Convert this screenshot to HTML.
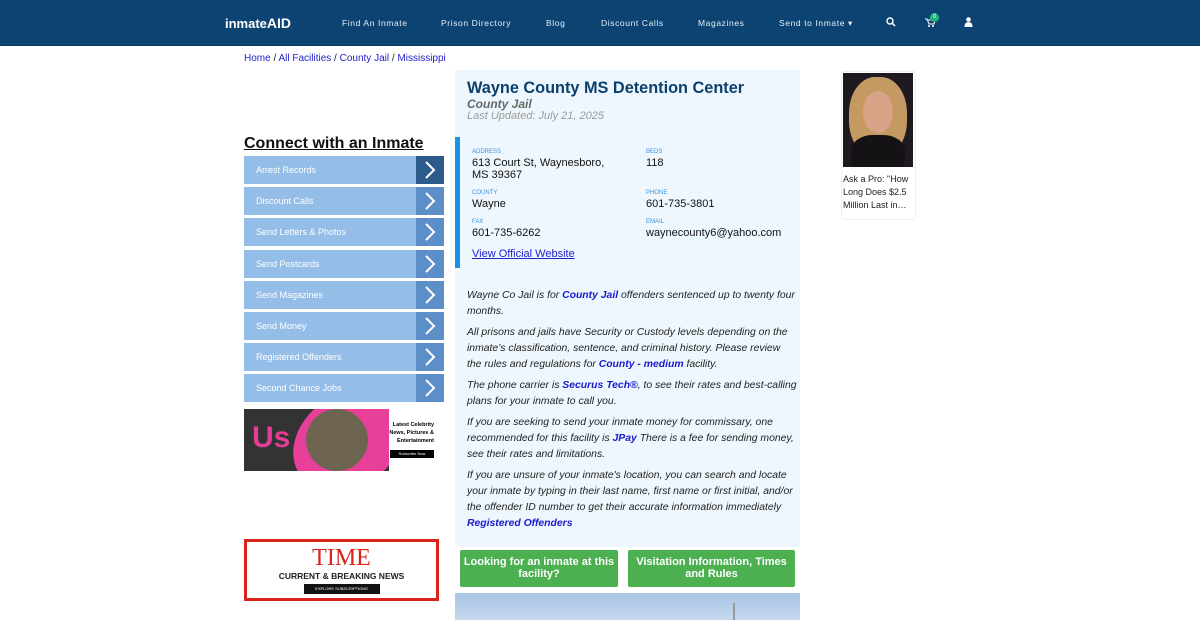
<!DOCTYPE html>
<html><head><meta charset="utf-8"><style>
*{margin:0;padding:0;box-sizing:border-box}
body{width:1200px;height:620px;overflow:hidden;background:#fff;font-family:"Liberation Sans",sans-serif;position:relative}
.hdr{position:absolute;left:0;top:0;width:1200px;height:46px;background:#0c4373;border-bottom:1px solid #0a3760}
.hdr .nav{position:absolute;top:18px;color:#e6eef6;font-size:8.5px;letter-spacing:.6px}
.logo{position:absolute;left:225px;top:15px;color:#fff;font-weight:bold;font-size:13px}
.bc{position:absolute;left:244px;top:53px;font-size:10px;color:#222}
.bc a{color:#2222cc;text-decoration:none}
.main{position:absolute;left:455px;top:70px;width:345px;height:477px;background:#eef7fd}
h1{position:absolute;left:467px;top:79px;font-size:16.3px;color:#0b3f6e;font-weight:bold}
.sub{position:absolute;left:467px;top:97px;font-size:12px;color:#666;font-style:italic;font-weight:bold}
.upd{position:absolute;left:467px;top:110px;font-size:11px;color:#999;font-style:italic}
.bar{position:absolute;left:455px;top:137px;width:5px;height:131px;background:#1891e6}
.lbl{position:absolute;font-size:6px;color:#3b92e0}
.val{position:absolute;font-size:11px;color:#111;line-height:12px}
.txt{position:absolute;left:467px;top:288px;width:330px;font-size:10.4px;line-height:16px;font-style:italic;color:#222}
.txt p{margin-bottom:5px}
.txt b{color:#1a1ad0}
.con{position:absolute;left:244px;top:135px;font-size:16px;font-weight:bold;text-decoration:underline;color:#111}
.m{position:absolute;left:244px;width:200px;height:28px;background:#94bde8;color:#fff;font-size:9px;line-height:28px;padding-left:12px}
.m i{position:absolute;right:0;top:0;width:28px;height:28px;background:#5c8fc8}
.m i svg{position:absolute;left:7px;top:5px}
.btn{position:absolute;top:550px;height:37px;background:#4caf50;color:#fff;font-size:11px;font-weight:bold;text-align:center;line-height:12px;padding-top:6px;border-radius:2px}
</style></head><body>
<div class="hdr">
<div class="logo">inmate<span style="font-size:14px">AID</span></div>
<div class="nav" style="left:342px">Find An Inmate</div>
<div class="nav" style="left:441px">Prison Directory</div>
<div class="nav" style="left:546px">Blog</div>
<div class="nav" style="left:601px">Discount Calls</div>
<div class="nav" style="left:698px">Magazines</div>
<div class="nav" style="left:779px">Send to Inmate ▾</div>
<svg style="position:absolute;left:886px;top:17px" width="10" height="10"><circle cx="4" cy="4" r="3" stroke="#fff" stroke-width="1.4" fill="none"/><path d="M6 6l3 3" stroke="#fff" stroke-width="1.5"/></svg>
<svg style="position:absolute;left:925px;top:18px" width="10" height="10"><path d="M0 1h2l2 5h5l1-4H3" stroke="#fff" fill="none"/><circle cx="4" cy="8" r="1" fill="#fff"/><circle cx="8" cy="8" r="1" fill="#fff"/></svg>
<div style="position:absolute;left:930px;top:13px;width:9px;height:9px;border-radius:50%;background:#1fb37c;color:#fff;font-size:6px;text-align:center;line-height:9px">0</div>
<svg style="position:absolute;left:964px;top:17px" width="9" height="10"><circle cx="4.5" cy="2.5" r="2.3" fill="#fff"/><path d="M0.5 10q0-5 4-5t4 5z" fill="#fff"/></svg>
</div>
<div class="bc"><a>Home</a> / <a>All Facilities</a> / <a>County Jail</a> / <a>Mississippi</a></div>
<div class="con">Connect with an Inmate</div>
<div class="m" style="top:156px">Arrest Records<i style="background:#2d5b8c"><svg width="14" height="18"><path d="M3 1l8 8-8 8" stroke="#fff" stroke-width="2" fill="none"/></svg></i></div>
<div class="m" style="top:187px">Discount Calls<i><svg width="14" height="18"><path d="M3 1l8 8-8 8" stroke="#fff" stroke-width="2" fill="none"/></svg></i></div>
<div class="m" style="top:218px">Send Letters &amp; Photos<i><svg width="14" height="18"><path d="M3 1l8 8-8 8" stroke="#fff" stroke-width="2" fill="none"/></svg></i></div>
<div class="m" style="top:250px">Send Postcards<i><svg width="14" height="18"><path d="M3 1l8 8-8 8" stroke="#fff" stroke-width="2" fill="none"/></svg></i></div>
<div class="m" style="top:281px">Send Magazines<i><svg width="14" height="18"><path d="M3 1l8 8-8 8" stroke="#fff" stroke-width="2" fill="none"/></svg></i></div>
<div class="m" style="top:312px">Send Money<i><svg width="14" height="18"><path d="M3 1l8 8-8 8" stroke="#fff" stroke-width="2" fill="none"/></svg></i></div>
<div class="m" style="top:343px">Registered Offenders<i><svg width="14" height="18"><path d="M3 1l8 8-8 8" stroke="#fff" stroke-width="2" fill="none"/></svg></i></div>
<div class="m" style="top:374px">Second Chance Jobs<i><svg width="14" height="18"><path d="M3 1l8 8-8 8" stroke="#fff" stroke-width="2" fill="none"/></svg></i></div>
<div style="position:absolute;left:244px;top:409px;width:200px;height:62px;background:#fff;overflow:hidden">
<div style="position:absolute;left:0;top:0;width:145px;height:62px;background:#333;overflow:hidden">
<div style="position:absolute;left:45px;top:-15px;width:120px;height:92px;border-radius:50%;background:#e8409a;transform:rotate(-35deg)"></div>
<div style="position:absolute;left:62px;top:0px;width:62px;height:62px;border-radius:50%;background:#6e6550;transform:rotate(-35deg)"></div>
<div style="position:absolute;left:8px;top:14px;color:#e43d96;font-size:30px;font-weight:bold;line-height:30px">Us</div>
</div>
<div style="position:absolute;right:10px;top:12px;font-size:5.5px;font-weight:bold;text-align:right;line-height:8px">Latest Celebrity<br>News, Pictures &amp;<br>Entertainment</div>
<div style="position:absolute;right:10px;top:41px;width:44px;height:8px;background:#000;color:#fff;font-size:4px;text-align:center;line-height:8px">Subscribe Now</div>
</div>
<div style="position:absolute;left:244px;top:539px;width:195px;height:62px;border:3px solid #d9241b;text-align:center">
<div style="font-family:'Liberation Serif',serif;color:#d9241b;font-size:24px;line-height:26px;margin-top:3px">TIME</div>
<div style="font-size:8.5px;font-weight:bold;color:#222">CURRENT &amp; BREAKING NEWS</div>
<div style="margin:3px auto 0;width:76px;height:10px;background:#111;color:#fff;font-size:4px;line-height:10px">EXPLORE SUBSCRIPTIONS</div>
</div>
<div class="main"></div>
<h1>Wayne County MS Detention Center</h1>
<div class="sub">County Jail</div>
<div class="upd">Last Updated: July 21, 2025</div>
<div class="bar"></div>
<div class="lbl" style="left:472px;top:149px">ADDRESS</div>
<div class="val" style="left:472px;top:157px">613 Court St, Waynesboro,<br>MS 39367</div>
<div class="lbl" style="left:646px;top:149px">BEDS</div>
<div class="val" style="left:646px;top:157px">118</div>
<div class="lbl" style="left:472px;top:190px">COUNTY</div>
<div class="val" style="left:472px;top:198px">Wayne</div>
<div class="lbl" style="left:646px;top:190px">PHONE</div>
<div class="val" style="left:646px;top:198px">601-735-3801</div>
<div class="lbl" style="left:472px;top:219px">FAX</div>
<div class="val" style="left:472px;top:227px">601-735-6262</div>
<div class="lbl" style="left:646px;top:219px">EMAIL</div>
<div class="val" style="left:646px;top:227px">waynecounty6@yahoo.com</div>
<div class="val" style="left:472px;top:248px;color:#2222cc;text-decoration:underline">View Official Website</div>
<div class="txt">
<p>Wayne Co Jail is for <b>County Jail</b> offenders sentenced up to twenty four months.</p>
<p>All prisons and jails have Security or Custody levels depending on the inmate’s classification, sentence, and criminal history. Please review the rules and regulations for <b>County - medium</b> facility.</p>
<p>The phone carrier is <b>Securus Tech®</b>, to see their rates and best-calling plans for your inmate to call you.</p>
<p>If you are seeking to send your inmate money for commissary, one recommended for this facility is <b>JPay</b> There is a fee for sending money, see their rates and limitations.</p>
<p>If you are unsure of your inmate's location, you can search and locate your inmate by typing in their last name, first name or first initial, and/or the offender ID number to get their accurate information immediately <b>Registered Offenders</b></p>
</div>
<div class="btn" style="left:460px;width:158px">Looking for an inmate at this facility?</div>
<div class="btn" style="left:628px;width:167px">Visitation Information, Times and Rules</div>
<div style="position:absolute;left:455px;top:593px;width:345px;height:27px;background:linear-gradient(#a9c5e6,#c5d8ec)"></div>
<div style="position:absolute;left:733px;top:603px;width:2px;height:17px;background:#999"></div>
<div style="position:absolute;left:841px;top:71px;width:75px;height:149px;border:1px solid #eee;border-radius:3px;background:#fff"></div>
<div style="position:absolute;left:843px;top:73px;width:70px;height:94px;background:#1e1a20;overflow:hidden">
<div style="position:absolute;left:6px;top:4px;width:58px;height:80px;border-radius:45%;background:#c49a62"></div>
<div style="position:absolute;left:20px;top:18px;width:30px;height:42px;border-radius:50%;background:#d8a487"></div>
<div style="position:absolute;left:8px;top:62px;width:54px;height:40px;border-radius:40%;background:#141214"></div>
</div>
<div style="position:absolute;left:843px;top:173px;width:72px;font-size:9px;line-height:13px;color:#222">Ask a Pro: "How Long Does $2.5 Million Last in…</div>
</body></html>
